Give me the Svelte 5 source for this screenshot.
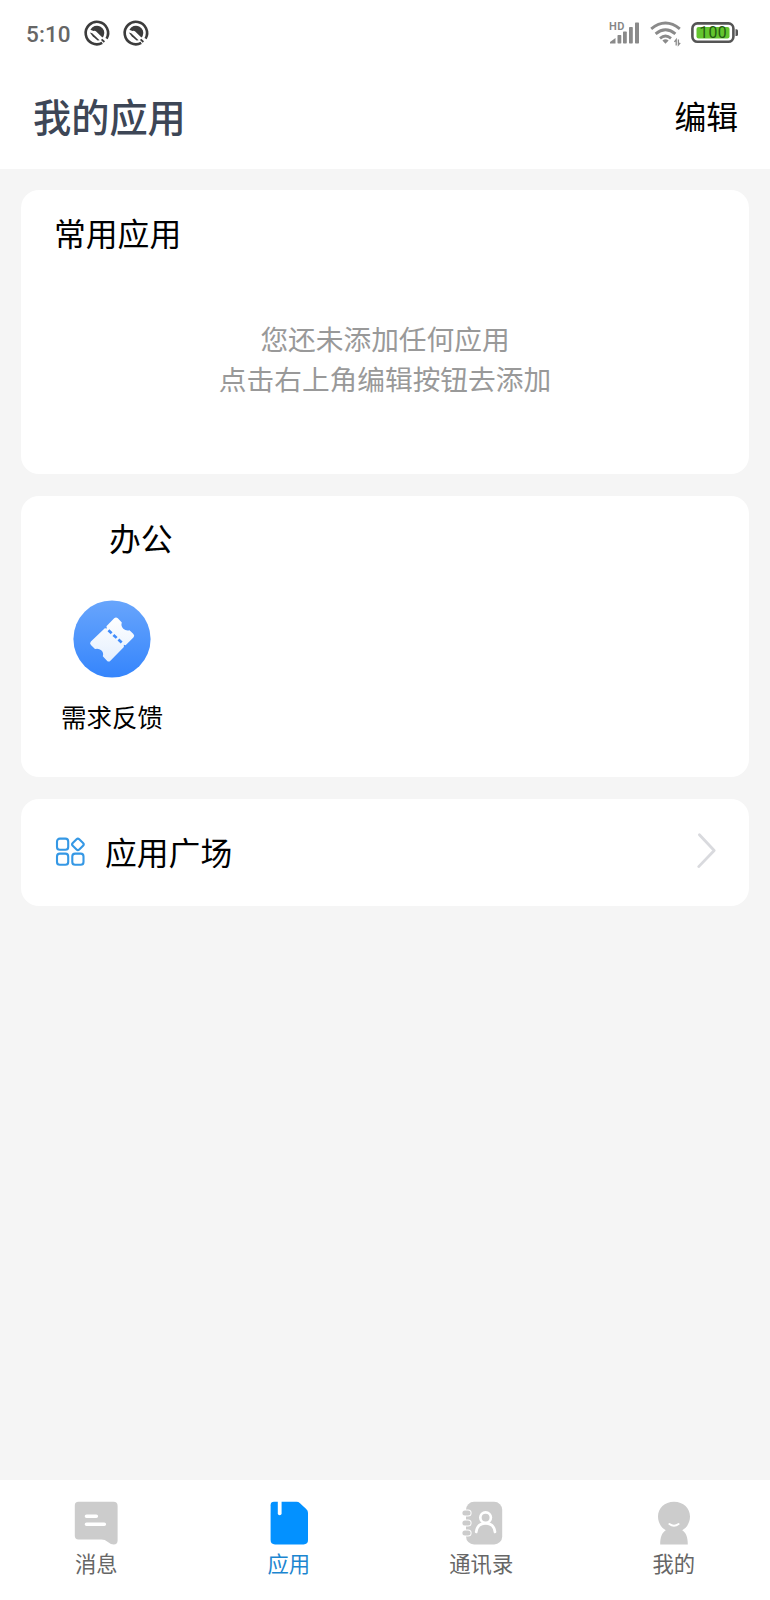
<script>
  const tabs = [
    { id: 'message', label: '消息' },
    { id: 'apps', label: '应用' },
    { id: 'contacts', label: '通讯录' },
    { id: 'mine', label: '我的' }
  ];
  let active = $state('apps');
</script>

<div class="screen">
  <div class="status">
    <span class="time">5:10</span>
    {#each [0, 1] as n (n)}
      <svg class="notice" width="26" height="26" viewBox="0 0 26 26">
        <path d="M22.6 18.6A11.2 11.2 0 1 0 18.2 22.9" fill="none" stroke="#3c3c3c" stroke-width="2.6" />
        <path d="M6.4 9.8A7.2 7.2 0 0 1 19.6 16.2L18.4 17.6L12.2 11.4Q10.8 10.2 9.4 11Z" fill="#3c3c3c" />
        <path d="M5.8 12.6L8.2 13.2L15.6 20.2L13.6 20.4L8.6 16.2Z" fill="#3c3c3c" />
        <path d="M17.6 19.4L20.4 22" stroke="#3c3c3c" stroke-width="1.8" />
      </svg>
    {/each}
    <div class="indicators">
      <svg class="signal" width="32" height="30" viewBox="0 -5 32 30">
        <text x="0" y="9" font-family="Roboto, sans-serif" font-size="11" font-weight="600" letter-spacing=".4" fill="#858585">HD</text>
        <g fill="#8a8a8a">
          <path d="M1 22.5V21L6.5 17V22.5Z" />
          <rect x="8.5" y="14" width="3.8" height="8.5" rx=".7" />
          <rect x="14" y="10.5" width="3.8" height="12" rx=".7" />
          <rect x="20" y="6" width="3.8" height="16.5" rx=".7" />
          <rect x="26" y="1.5" width="4" height="21" rx=".7" />
        </g>
      </svg>
      <svg class="wifi" width="32" height="26" viewBox="0 0 32 26">
        <g fill="none" stroke="#8a8a8a" stroke-width="2.9">
          <path d="M1.2 7.8Q15.5-3.8 29.8 7.8" />
          <path d="M5.6 12.8Q15.5 4.6 25.4 12.8" />
          <path d="M10 17.3Q15.5 12.9 21 17.3" />
        </g>
        <path d="M12.4 19.4Q15.5 17.2 18.6 19.4L15.5 22.8Z" fill="#8a8a8a" />
        <path d="M26.2 24.5V18.6L24.4 20.8M28.4 18.4V24L30.2 21.8" fill="none" stroke="#8a8a8a" stroke-width="1.3" />
      </svg>
      <svg class="battery" width="48" height="22" viewBox="0 0 48 22">
        <rect x="1.4" y="1.4" width="41" height="18.4" rx="5" fill="#fff" stroke="#555" stroke-width="2.6" />
        <rect x="5.5" y="5" width="33" height="11.6" rx="2" fill="#63c52e" />
        <path d="M44.5 7.3H45.5Q47 7.3 47 8.8V12.5Q47 14 45.5 14H44.5Z" fill="#555" />
        <text x="22.2" y="16.3" text-anchor="middle" font-family="Roboto, sans-serif" font-size="15.8" letter-spacing=".4" fill="#245a13">100</text>
      </svg>
    </div>
  </div>

  <header>
    <h1>我的应用</h1>
    <span class="edit">编辑</span>
  </header>

  <main>
    <section class="card frequent">
      <h2>常用应用</h2>
      <p>您还未添加任何应用<br />点击右上角编辑按钮去添加</p>
    </section>

    <section class="card office">
      <h2>办公</h2>
      <div class="app">
        <svg width="78" height="78" viewBox="0 0 78 78">
          <defs>
            <linearGradient id="disc" x1="0" y1="0" x2="0" y2="1">
              <stop offset="0" stop-color="#68a5fc" />
              <stop offset="1" stop-color="#3585fc" />
            </linearGradient>
            <linearGradient id="paper" x1="0" y1="0" x2="0" y2="1">
              <stop offset="0" stop-color="#fff" />
              <stop offset="1" stop-color="#e4effe" />
            </linearGradient>
          </defs>
          <circle cx="39" cy="39" r="38.6" fill="url(#disc)" />
          <path d="M41.2 18.3Q43 16.5 44.8 18.3L48.8 22.6Q47.6 26.2 50.3 28.7Q53 31.2 56.5 30.2L60.4 34Q62 35.7 60.4 37.4L52.6 45.2L50.8 44.8L50.9 46.9L37.4 60.7Q35.7 62.4 34 60.7L29.8 56.3Q31 52.8 28.2 50.3Q25.7 47.9 22 49L17.9 45Q16.2 43.3 17.9 41.6L31.8 28.2L34 28.6L33.4 26.3Z" fill="url(#paper)" />
          <path d="M35.4 30.3L50 43.7" stroke="#428dfc" stroke-width="2.7" stroke-dasharray="4.4 2.4" fill="none" />
        </svg>
        <span>需求反馈</span>
      </div>
    </section>

    <section class="card plaza">
      <svg width="30" height="30" viewBox="0 0 30 30" fill="none" stroke="#3598e5" stroke-width="2.1">
        <rect x="2" y="1.6" width="11.2" height="11.2" rx="2.8" />
        <rect x="2" y="16.6" width="11.2" height="11.2" rx="2.8" />
        <rect x="17.3" y="16.6" width="11.2" height="11.2" rx="2.8" />
        <rect x="18.3" y="2.8" width="9.2" height="9.2" rx="1.9" transform="rotate(45 22.9 7.4)" />
      </svg>
      <span>应用广场</span>
      <svg class="arrow" width="20" height="36" viewBox="0 0 20 36" fill="none" stroke="#d9dade" stroke-width="2.8" stroke-linecap="round" stroke-linejoin="round">
        <path d="M2.4 1.8L17.2 17.5L1.7 33.6" />
      </svg>
    </section>
  </main>

  <nav>
    {#each tabs as tab (tab.id)}
      <button class:active={active === tab.id} onclick={() => (active = tab.id)}>
        <svg width="44" height="44" viewBox="0 0 44 44" fill="currentColor">
          {#if tab.id === 'message'}
            <path d="M4.5 .8H39.5Q43.6.8 43.6 4.9V39.5Q43.6 43.4 39.7 43.4Q36.5 43.4 33.5 40.7Q31 38.4 27.5 38.4H4.5Q.8 38.4.8 34.7V4.5Q.8.8 4.5 .8Z" />
            <path d="M12.5 15.3H22.3M12.5 23.3H30.3" stroke="#fff" stroke-width="3.6" stroke-linecap="round" />
          {:else if tab.id === 'apps'}
            <path d="M7 .8H29.5Q31.5.8 33 2.2L39.2 8Q41 9.7 41 12V39Q41 43.4 36.6 43.4H8Q3.6 43.4 3.6 39V4.2Q3.6.8 7 .8Z" />
            <path d="M10.8 0V12.3Q10.8 14.2 12.7 14.2Q14.6 14.2 14.6 12.3V0Z" fill="#fff" />
          {:else if tab.id === 'contacts'}
            <rect x="7" y=".8" width="36.2" height="42.6" rx="8" />
            <g fill="#fff">
              <rect x="2" y="8.6" width="10.6" height="7" rx="3.5" />
              <rect x="2" y="18.5" width="10.6" height="7" rx="3.5" />
              <rect x="2" y="28.4" width="10.6" height="7" rx="3.5" />
            </g>
            <rect x="3.4" y="9.6" width="8.2" height="5" rx="2.5" />
            <rect x="3.4" y="19.5" width="8.2" height="5" rx="2.5" />
            <rect x="3.4" y="29.4" width="8.2" height="5" rx="2.5" />
            <g fill="none" stroke="#fff" stroke-width="2.7" stroke-linecap="round">
              <circle cx="26.6" cy="16.6" r="5.3" />
              <path d="M17.2 31Q18.2 22.4 26.6 22.4T36 31" />
            </g>
          {:else}
            <path d="M22 .8C31.5.8 38 7.2 38 15.6C38 21.8 34.6 27 30.2 29.2C34 31.5 35.8 36 35.8 43.4H8.2C8.2 36 10 31.5 13.8 29.2C9.4 27 6 21.8 6 15.6C6 7.2 12.5.8 22 .8Z" />
            <path d="M17.4 23Q22 26.3 26.6 23" fill="none" stroke="#fff" stroke-width="2" stroke-linecap="round" />
          {/if}
        </svg>
        <span>{tab.label}</span>
      </button>
    {/each}
  </nav>
</div>

<style>
  :global(body) {
    margin: 0;
    background: #f5f5f5;
  }
  .screen {
    display: flex;
    flex-direction: column;
    width: 770px;
    height: 1600px;
    background: #f5f5f5;
    color: #000;
    font-family: 'Noto Sans CJK SC', sans-serif;
  }
  svg {
    display: block;
    flex: none;
    overflow: visible;
  }
  .status {
    display: flex;
    align-items: center;
    box-sizing: border-box;
    height: 66px;
    padding: 0 31px 0 26px;
    background: #fff;
  }
  .time {
    width: 58px;
    margin-top: 2px;
    color: #666;
    font: 500 22.5px/26px Roboto, sans-serif;
    letter-spacing: 0.1px;
  }
  .notice {
    margin-right: 13px;
  }
  .indicators {
    display: flex;
    align-items: center;
    margin-left: auto;
  }
  .signal {
    margin: -5px 1px 0 0;
  }
  .wifi {
    margin: 2px 9px 0 8px;
  }
  header {
    display: flex;
    align-items: center;
    justify-content: space-between;
    box-sizing: border-box;
    height: 103px;
    padding: 0 32px 4px 33px;
    background: #fff;
  }
  h1,
  h2,
  p {
    margin: 0;
    font-weight: 400;
  }
  h1 {
    color: #3d4656;
    font-size: 38.2px;
    font-weight: 500;
    line-height: 56px;
  }
  .edit {
    margin-top: -1px;
    font-size: 31.8px;
    line-height: 46px;
  }
  main {
    display: flex;
    flex: 1;
    flex-direction: column;
    gap: 21.5px;
    padding: 21px 21px 0;
  }
  .card {
    box-sizing: border-box;
    border-radius: 18px;
    background: #fff;
  }
  h2 {
    font-size: 31.8px;
    line-height: 46px;
  }
  .frequent {
    height: 284px;
    padding: 19px 33px;
  }
  .frequent p {
    margin-top: 63px;
    color: #999;
    font-size: 27.7px;
    line-height: 40px;
    text-align: center;
  }
  .office {
    height: 281.5px;
    padding: 18.5px 33px;
  }
  .office h2 {
    padding-left: 55px;
  }
  .app {
    display: flex;
    flex-direction: column;
    align-items: center;
    width: 116px;
    margin-top: 40px;
  }
  .app span {
    margin-top: 19px;
    font-size: 25.5px;
    line-height: 37px;
    white-space: nowrap;
  }
  .plaza {
    display: flex;
    align-items: center;
    height: 107px;
    padding: 0 32px 0 34px;
  }
  .plaza span {
    margin: -2px auto 0 20px;
    font-size: 31.8px;
    line-height: 46px;
  }
  .arrow {
    margin-bottom: 2px;
  }
  nav {
    display: grid;
    grid-template-columns: repeat(4, 1fr);
    height: 120px;
    background: #fff;
  }
  button {
    display: flex;
    flex-direction: column;
    align-items: center;
    padding: 21px 0 0;
    border: 0;
    background: none;
    color: #ccc;
    font-family: inherit;
  }
  button span {
    margin-top: 2px;
    color: #666;
    font-size: 21.3px;
    line-height: 31px;
  }
  button.active {
    color: #0391ff;
  }
  button.active span {
    color: #1c86d0;
  }
</style>
